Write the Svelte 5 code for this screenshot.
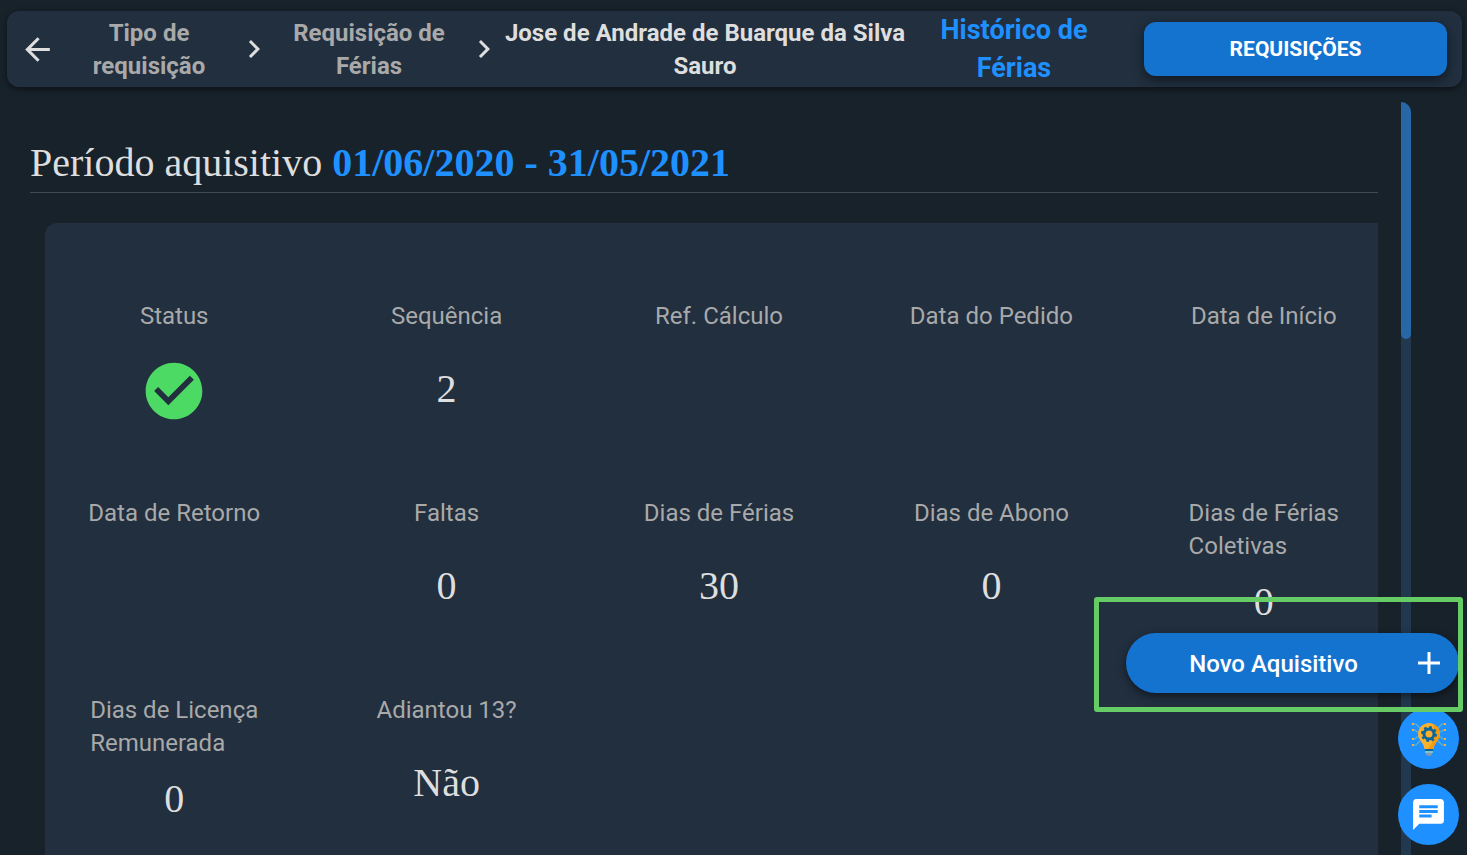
<script lang="ts">
  type Field = { label: string[]; value?: string; done?: boolean };

  const period = '01/06/2020 - 31/05/2021';

  const fields: Field[] = [
    { label: ['Status'], done: true },
    { label: ['Sequência'], value: '2' },
    { label: ['Ref. Cálculo'] },
    { label: ['Data do Pedido'] },
    { label: ['Data de Início'] },
    { label: ['Data de Retorno'] },
    { label: ['Faltas'], value: '0' },
    { label: ['Dias de Férias'], value: '30' },
    { label: ['Dias de Abono'], value: '0' },
    { label: ['Dias de Férias', 'Coletivas'], value: '0' },
    { label: ['Dias de Licença', 'Remunerada'], value: '0' },
    { label: ['Adiantou 13?'], value: 'Não' },
  ];
</script>

{#snippet chevron()}
  <svg class="chevron" viewBox="0 0 24 24" aria-hidden="true">
    <path d="M8.6 16.6 13.2 12 8.6 7.4 10 6l6 6-6 6z" />
  </svg>
{/snippet}

<div class="page">
  <header class="topbar">
    <button class="back" aria-label="Voltar">
      <svg viewBox="0 0 24 24"><path d="M20 11H7.8l5.6-5.6L12 4l-8 8 8 8 1.4-1.4L7.8 13H20z" /></svg>
    </button>
    <nav class="crumbs">
      <a class="crumb first" href="#tipo">Tipo de requisição</a>
      {@render chevron()}
      <a class="crumb second" href="#ferias">Requisição de Férias</a>
      {@render chevron()}
      <a class="crumb person" href="#pessoa">Jose de Andrade de Buarque da Silva Sauro</a>
    </nav>
    <h1>Histórico de Férias</h1>
    <button class="requests">REQUISIÇÕES</button>
  </header>

  <div class="body">
    <main>
      <h2>Período aquisitivo <strong>{period}</strong></h2>
      <dl class="card">
        {#each fields as field}
          <div class="field">
            <dt>
              {#each field.label as line}
                <span>{line}</span>
              {/each}
            </dt>
            <dd>
              {#if field.done}
                <svg class="check" viewBox="0 0 24 24" role="img" aria-label="Concluído">
                  <path d="M12 2C6.5 2 2 6.5 2 12s4.5 10 10 10 10-4.5 10-10S17.5 2 12 2zm-2 15-5-5 1.4-1.4 3.6 3.6 7.6-7.6L19 8z" />
                </svg>
              {:else}
                {field.value ?? ''}
              {/if}
            </dd>
          </div>
        {/each}
      </dl>
    </main>
    <div class="track"><div class="thumb"></div></div>
  </div>

  <!-- botões flutuantes -->
  <div class="actions">
    <button class="new">
      <span>Novo Aquisitivo</span>
      <svg viewBox="0 0 36 36" aria-hidden="true"><path d="M7 16.5h9.5V7h3v9.500H29v3h-9.500V29h-3v-9.500H7z" /></svg>
    </button>
    <button class="fab" aria-label="Ideias">
      <svg class="bulb" viewBox="0 0 36 36">
        <g fill="none" stroke="#61b5c6" stroke-width="1.2">
          <path d="M2 3h3l4 4M2 9h2l2 2h3M2 18h2l2-2h3M2 24h3l4-4M34 3h-3l-4 4M34 9h-2l-2 2h-3M34 18h-2l-2-2h-3M34 24h-3l-4-4" />
        </g>
        <g fill="#fbb02e">
          <path d="M1 2h2v2H1zM1 8h2v2H1zM1 17h2v2H1zM1 23h2v2H1zM33 2h2v2h-2zM33 8h2v2h-2zM33 17h2v2h-2zM33 23h2v2h-2z" />
          <path d="M18 2C12 2 7 7 7 13c0 6 5.5 8 6.5 15h9c1-7 6.500-9 6.500-15 0-6-5-11-11-11z" />
        </g>
        <path d="M22 3c4 1.500 7 5 7 10 0 6-5.500 8-6.500 15h-6c5-5 9-11 5.500-25z" fill="#f59a0c" />
        <circle cx="18" cy="13" r="5" fill="none" stroke="#0b659d" stroke-width="3" />
        <circle cx="18" cy="13" r="7" fill="none" stroke="#0b659d" stroke-width="2" stroke-dasharray="2.75 2.75" />
        <path d="M14 28h8v2h-8z" fill="#0b659d" />
        <path d="M14 30h8v2h-8z" fill="#78c3d2" />
        <path d="M15 32h6v1q-.5 2-3 2t-3-2z" fill="#8f98a0" />
      </svg>
    </button>
    <button class="fab" aria-label="Mensagens">
      <svg class="chat" viewBox="0 0 24 24">
        <path d="M20 2H4c-1.100 0-2 .9-2 2v18l4-4h14c1.100 0 2-.9 2-2V4c0-1.100-.9-2-2-2zM6 6h12v2H6zm8 8H6v-2h8zm4-3H6V9h12z" />
      </svg>
    </button>
  </div>
</div>

<style>
  :global(body) {
    background: #18222b;
  }

  .page {
    height: 100vh;
    box-sizing: border-box;
    padding: 11px 5px 0 7px;
    display: flex;
    flex-direction: column;
    overflow: hidden;
    position: relative;
    color: #dedede;
    font-family: Roboto, "Liberation Sans", sans-serif;
  }

  button {
    border: 0;
    padding: 0;
    font-family: inherit;
    color: #fff;
    cursor: pointer;
  }

  svg {
    display: block;
    fill: currentColor;
  }

  .topbar {
    display: flex;
    align-items: center;
    flex: none;
    height: 76px;
    box-sizing: border-box;
    padding-right: 15px;
    border-radius: 12px;
    background: #212f3f;
    box-shadow: 0 2px 6px rgba(0, 0, 0, 0.5);
  }

  .back {
    width: 55px;
    padding-left: 12px;
    background: none;
    color: #dedede;
  }

  .back svg {
    width: 37px;
    height: 37px;
  }

  .crumbs {
    flex: 1;
    display: flex;
    align-items: center;
  }

  .crumb {
    box-sizing: border-box;
    padding-top: 2px;
    font-size: 24px;
    line-height: 33px;
    font-weight: 700;
    text-align: center;
    text-decoration: none;
    color: #a9a9a9;
  }

  .first {
    width: 174px;
    padding-inline: 28px;
  }

  .second {
    width: 194px;
    padding-inline: 16px;
  }

  .person {
    flex: 1;
    color: #dedede;
  }

  .chevron {
    flex: none;
    width: 36px;
    height: 36px;
  }

  h1 {
    width: 176px;
    margin: 0 42px 0 18px;
    font-size: 27px;
    line-height: 38px;
    font-weight: 700;
    text-align: center;
    color: #1e90ff;
  }

  .requests {
    width: 303px;
    height: 54px;
    border-radius: 12px;
    background: #1573d0;
    box-shadow: 0 4px 12px rgba(0, 0, 0, 0.5);
    font-size: 21px;
    font-weight: 700;
  }

  .body {
    flex: 1;
    min-height: 0;
    display: flex;
    padding: 15px 51px 0 23px;
  }

  main {
    flex: 1;
    overflow: hidden;
    margin-right: 23px;
  }

  h2 {
    margin: 37px 0 30px;
    padding-bottom: 5px;
    border-bottom: 1px solid #414b55;
    font: 400 40px/48px "Liberation Serif", serif;
  }

  h2 strong {
    font-weight: 700;
    color: #1e90ff;
  }

  .card {
    display: grid;
    grid-template-columns: repeat(5, 1fr);
    grid-auto-rows: 197px;
    column-gap: 44px;
    margin: 0 0 0 15px;
    padding: 77px 0 0 15px;
    border-radius: 12px 0 0 0;
    background: #212f3f;
  }

  .field {
    display: flex;
    flex-direction: column;
    align-items: center;
  }

  dt {
    min-height: 50px;
    font-size: 24px;
    line-height: 33px;
    color: #a9a9a9;
  }

  dt span {
    display: block;
  }

  dd {
    margin: 7px 0 0;
    font: 400 40px/64px "Liberation Serif", serif;
  }

  .check {
    width: 68px;
    height: 68px;
    color: #4cd964;
  }

  .track {
    width: 10px;
    border-radius: 0 10px 0 0;
    background: #22384f;
  }

  .thumb {
    height: 237px;
    border-radius: 0 10px 5px 5px;
    background: #2767a6;
  }

  .actions {
    position: absolute;
    right: 8px;
    bottom: 10px;
    display: flex;
    flex-direction: column;
    align-items: flex-end;
    gap: 15px;
  }

  .new {
    position: relative;
    z-index: 1;
    display: flex;
    align-items: center;
    width: 333px;
    height: 60px;
    padding-right: 12px;
    border-radius: 30px;
    background: #1573d0;
    box-shadow: 0 3px 8px rgba(0, 0, 0, 0.5);
    font-size: 24px;
    font-weight: 500;
  }

  /* moldura de destaque */
  .new::after {
    content: "";
    position: absolute;
    inset: -36px -4px -19px -32px;
    border: 5px solid #66cc66;
    border-radius: 3px;
    pointer-events: none;
  }

  .new span {
    flex: 1;
    padding: 2px 0 0 10px;
  }

  .new svg {
    width: 36px;
    height: 36px;
  }

  .fab {
    display: grid;
    place-items: center;
    width: 61px;
    height: 61px;
    border-radius: 50%;
    background: #1e90ff;
  }

  .bulb {
    width: 36px;
    height: 36px;
  }

  .chat {
    width: 37px;
    height: 37px;
  }
</style>
